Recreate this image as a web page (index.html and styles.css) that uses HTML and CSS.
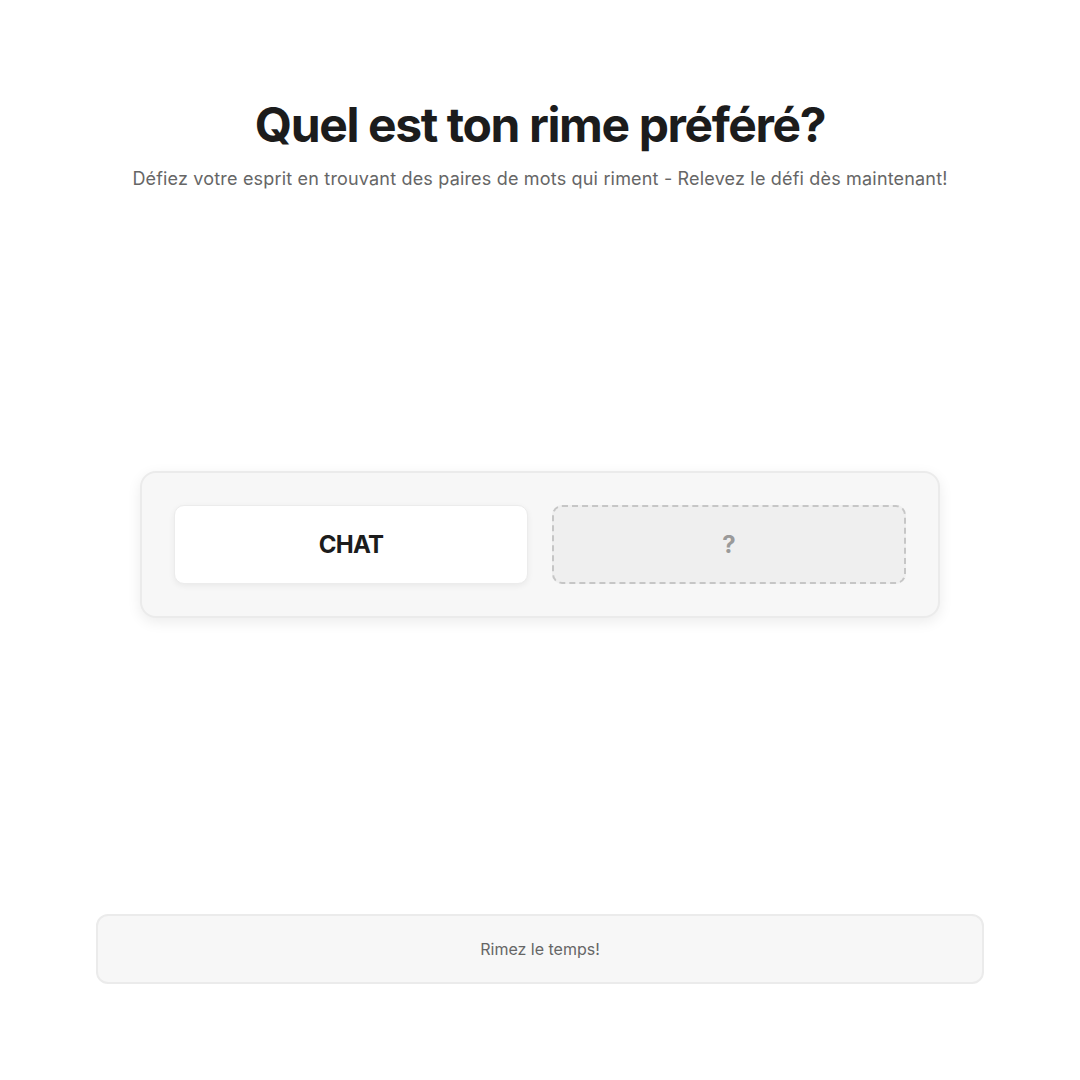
FILE: index.html
```html
<!DOCTYPE html>
<html lang="fr">
<head>
<meta charset="utf-8">
<title>Quel est ton rime préféré?</title>
<link rel="stylesheet" href="styles.css">
</head>
<body>
<div class="page">
  <header class="header">
    <h1 class="title">Quel est ton rime préféré?</h1>
    <p class="subtitle">Défiez votre esprit en trouvant des paires de mots qui riment - Relevez le défi dès maintenant!</p>
  </header>
  <main class="stage">
    <div class="card">
      <div class="tile tile-word">CHAT</div>
      <div class="tile tile-blank">?</div>
    </div>
  </main>
  <footer class="footer">Rimez le temps!</footer>
</div>
</body>
</html>
```

FILE: styles.css
```css
* { box-sizing: border-box; }
html, body { margin: 0; padding: 0; background: #ffffff; }
body {
  font-family: Inter, "Noto Sans", "Liberation Sans", sans-serif;
  color: #1c1c1c;
}
.page {
  height: 1080px;
  display: flex;
  flex-direction: column;
  padding: 96px 96px 96px;
}
.header {
  text-align: center;
}
.title {
  margin: 0;
  font-size: 48px;
  font-weight: 700;
  line-height: 58px;
  letter-spacing: -1.4px;
  color: #1c1c1c;
}
.subtitle {
  margin: 13px 0 0;
  font-size: 18px;
  line-height: 24px;
  letter-spacing: 0.18px;
  color: #666666;
}
.stage {
  flex: 1;
  display: flex;
  align-items: center;
  justify-content: center;
  padding-bottom: 16px;
}
.card {
  width: 800px;
  display: grid;
  grid-template-columns: 1fr 1fr;
  gap: 24px;
  padding: 32px;
  background: #f7f7f7;
  border: 2px solid #ebebeb;
  border-radius: 16px;
  box-shadow: 0 4px 14px rgba(0, 0, 0, 0.08);
}
.tile {
  height: 79px;
  display: flex;
  align-items: center;
  justify-content: center;
  font-size: 24px;
  font-weight: 700;
  letter-spacing: -0.8px;
  border-radius: 10px;
}
.tile-word {
  background: #ffffff;
  color: #1c1c1c;
  border: 1px solid #ececec;
  box-shadow: 0 2px 6px rgba(0, 0, 0, 0.06);
}
.tile-blank {
  background: #efefef;
  color: #9a9a9a;
  border: 2px dashed #c6c6c6;
  letter-spacing: 0;
}
.footer {
  height: 70px;
  display: flex;
  align-items: center;
  justify-content: center;
  background: #f7f7f7;
  border: 2px solid #ebebeb;
  border-radius: 12px;
  font-size: 16px;
  color: #666666;
}
```
